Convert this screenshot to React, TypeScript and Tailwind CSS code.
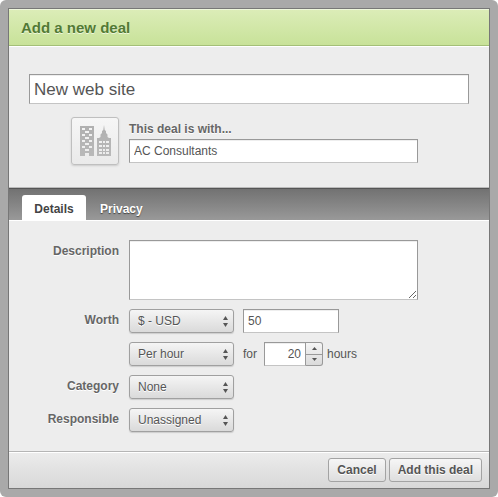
import { useId, useState } from 'react';
import type { ReactNode } from 'react';

const FIELD =
  'border border-[#999] border-b-[#c4c4c4] bg-white text-[#555] shadow-[inset_0_1px_0_#eee] outline-none';
const BUTTON =
  'h-6 rounded-[3px] border border-[#a3a3a3] bg-linear-to-b from-[#f6f6f6] to-[#dedede] px-2 text-xs leading-4 font-bold text-[#555] [text-shadow:0_1px_0_#fff]';

const TABS = ['Details', 'Privacy'];

function BuildingsIcon() {
  return (
    <svg viewBox="0 0 32 32" className="size-8" aria-hidden="true">
      <defs>
        <linearGradient id="buildings" x1="0" y1="0" x2="0" y2="1">
          <stop offset="0" stopColor="#b0b0b0" />
          <stop offset="1" stopColor="#b9b9b9" />
        </linearGradient>
      </defs>
      <path
        fill="url(#buildings)"
        fillRule="evenodd"
        d="M1 1h14v30h-5v-3H6v3H1zM3 3v2h3V3zM10 3v2h3V3zM6 6v2h4V6zM3 9v2h3V9zM10 9v2h3V9zM6 12v2h4v-2zM3 15v2h3v-2zM10 15v2h3v-2zM6 18v2h4v-2zM3 21v2h3v-2zM10 21v2h3v-2zM6 24v2h4v-2z"
      />
      <path
        fill="url(#buildings)"
        fillRule="evenodd"
        d="M25 0l.7 5 1.300 1v2l1.500 1.500V12l1.500 1h2v18H18V13h2l1.500-1V9.500L23 8V6l1.300-1zM20 16v2h3v-2zM24 16v2h2v-2zM27 16v2h3v-2zM20 20v2h3v-2zM24 20v2h2v-2zM27 20v2h3v-2zM20 24v2h3v-2zM24 24v2h2v-2zM27 24v2h3v-2zM20 27v2h3v-2zM24 27v2h2v-2zM27 27v2h3v-2z"
      />
    </svg>
  );
}

function Row({ label, htmlFor, children }: { label: string; htmlFor: string; children: ReactNode }) {
  return (
    <div className="flex items-start gap-2.5">
      <label
        htmlFor={htmlFor}
        className="w-[90px] shrink-0 pt-[3px] text-right text-xs leading-4 font-bold text-[#666] [text-shadow:0_1px_0_#fff]"
      >
        {label}
      </label>
      {children}
    </div>
  );
}

function Select({ id, label, options }: { id: string; label?: string; options: string[] }) {
  return (
    <div className="relative w-[105px] shrink-0">
      <select
        id={id}
        aria-label={label}
        className="block h-6 w-full appearance-none rounded-[3px] border border-[#a0a0a0] bg-linear-to-b from-[#f5f5f5] to-[#dadada] pr-5 pl-2 text-xs leading-4 text-[#555] shadow-[0_1px_1px_#ccc] outline-none [text-shadow:0_1px_0_#fff]"
      >
        {options.map((option) => (
          <option key={option}>{option}</option>
        ))}
      </select>
      <svg
        viewBox="0 0 5 11"
        className="pointer-events-none absolute top-[7px] right-1.5 h-[11px] w-[5px] fill-[#555]"
        aria-hidden="true"
      >
        <path d="M0 4h5L2.500 0zM0 7h5l-2.500 4z" />
      </svg>
    </div>
  );
}

// Number field with its own up/down buttons attached on the right
function HoursStepper() {
  const [hours, setHours] = useState('20');
  const step = (by: number): void => setHours(String(Math.max(0, (Number(hours) || 0) + by)));

  return (
    <div className="flex h-6">
      <input
        aria-label="Hours"
        inputMode="numeric"
        value={hours}
        onChange={(e) => setHours(e.target.value)}
        className={`${FIELD} w-[42px] px-1 text-right text-xs leading-4`}
      />
      <div className="flex w-[17px] flex-col divide-y divide-[#999] overflow-hidden rounded-r-[3px] border border-l-0 border-[#999] bg-linear-to-b from-[#f5f5f5] to-[#dadada]">
        <button
          type="button"
          aria-label="More hours"
          onClick={() => step(1)}
          className="flex flex-1 items-center justify-center"
        >
          <svg viewBox="0 0 5 3" className="h-[3px] w-[5px] fill-[#555]" aria-hidden="true">
            <path d="M0 3h5L2.500 0z" />
          </svg>
        </button>
        <button
          type="button"
          aria-label="Fewer hours"
          onClick={() => step(-1)}
          className="flex flex-1 items-center justify-center"
        >
          <svg viewBox="0 0 5 3" className="h-[3px] w-[5px] fill-[#555]" aria-hidden="true">
            <path d="M0 0h5L2.500 3z" />
          </svg>
        </button>
      </div>
    </div>
  );
}

function DetailsPanel() {
  const id = useId();

  return (
    <div className="flex flex-col gap-[9px]">
      <Row label="Description" htmlFor={`${id}-description`}>
        <textarea
          id={`${id}-description`}
          className={`${FIELD} mr-[51px] block h-[60px] min-w-0 flex-1 resize px-1 py-1 text-xs`}
        />
      </Row>
      <Row label="Worth" htmlFor={`${id}-currency`}>
        <div className="flex flex-col gap-[9px]">
          <div className="flex gap-[9px]">
            <Select id={`${id}-currency`} options={['$ - USD', '€ - EUR', '£ - GBP']} />
            <input
              aria-label="Amount"
              defaultValue="50"
              className={`${FIELD} h-6 w-24 px-1 text-xs leading-4`}
            />
          </div>
          <div className="flex items-center text-xs leading-4 text-[#555]">
            <Select
              id={`${id}-rate`}
              label="Rate"
              options={['Per hour', 'Per month', 'Per year', 'Fixed']}
            />
            <span className="mr-[7px] ml-[9px]">for</span>
            <HoursStepper />
            <span className="ml-1">hours</span>
          </div>
        </div>
      </Row>
      <Row label="Category" htmlFor={`${id}-category`}>
        <Select id={`${id}-category`} options={['None']} />
      </Row>
      <Row label="Responsible" htmlFor={`${id}-responsible`}>
        <Select id={`${id}-responsible`} options={['Unassigned']} />
      </Row>
    </div>
  );
}

export default function App() {
  const [tab, setTab] = useState('Details');

  return (
    <div className="flex min-h-screen flex-col rounded-md bg-[#a9a9a9] p-2 font-['Liberation_Sans',Arial,sans-serif]">
      <form
        className="flex flex-1 flex-col border border-[#777] bg-[#ededed]"
        onSubmit={(e) => e.preventDefault()}
      >
        <header className="border-b border-[#a4bf78] bg-linear-to-b from-[#dcedb8] to-[#c8e299] px-3 pt-[9px] pb-[7px] shadow-[inset_0_1px_0_#eef7dc,0_1px_0_#fff]">
          <h1 className="text-[15px] leading-5 font-bold text-[#527a34] [text-shadow:0_1px_0_#eef7dc]">
            Add a new deal
          </h1>
        </header>

        <section className="border-b border-[#bbb] px-5 pt-7 pb-[22px]">
          <input
            aria-label="Deal name"
            defaultValue="New web site"
            className={`${FIELD} block h-[30px] w-full px-1 pt-0.5 text-[17px] leading-5`}
          />
          <div className="mt-[13px] flex gap-2.5 pr-[51px] pl-[42px]">
            <div className="flex size-12 shrink-0 items-center justify-center rounded-[3px] border border-[#bfbfbf] bg-linear-to-b from-[#f6f6f6] to-[#eaeaea] shadow-[0_1px_2px_#ccc]">
              <BuildingsIcon />
            </div>
            <div className="min-w-0 flex-1 pt-1">
              <label
                htmlFor="deal-company"
                className="block pb-0.5 text-xs leading-4 font-bold text-[#666] [text-shadow:0_1px_0_#fff]"
              >
                This deal is with...
              </label>
              <input
                id="deal-company"
                defaultValue="AC Consultants"
                className={`${FIELD} block h-6 w-full px-1 text-xs leading-4`}
              />
            </div>
          </div>
        </section>

        <div
          role="tablist"
          className="flex border-t border-[#555] bg-linear-to-b from-[#727272] to-[#999] px-[13px] pt-1.5 shadow-[0_1px_0_#fff]"
        >
          {TABS.map((name) => (
            <button
              key={name}
              type="button"
              role="tab"
              aria-selected={tab === name}
              onClick={() => setTab(name)}
              className={`h-[25px] min-w-16 rounded-t-[3px] pt-[3px] text-xs leading-4 font-bold ${
                tab === name
                  ? 'bg-white px-3 text-[#444]'
                  : 'px-3.5 text-white [text-shadow:0_1px_1px_#444]'
              }`}
            >
              {name}
            </button>
          ))}
        </div>

        <div role="tabpanel" className="flex-1 px-5 pt-5 pb-4">
          {tab === 'Details' && <DetailsPanel />}
        </div>

        <footer className="flex justify-end gap-[3px] border-t border-[#b5b5b5] bg-linear-to-b from-[#ececec] to-[#d8d8d8] px-[7px] py-1.5 shadow-[inset_0_1px_0_#fff]">
          <button type="button" className={BUTTON}>
            Cancel
          </button>
          <button type="submit" className={BUTTON}>
            Add this deal
          </button>
        </footer>
      </form>
    </div>
  );
}
